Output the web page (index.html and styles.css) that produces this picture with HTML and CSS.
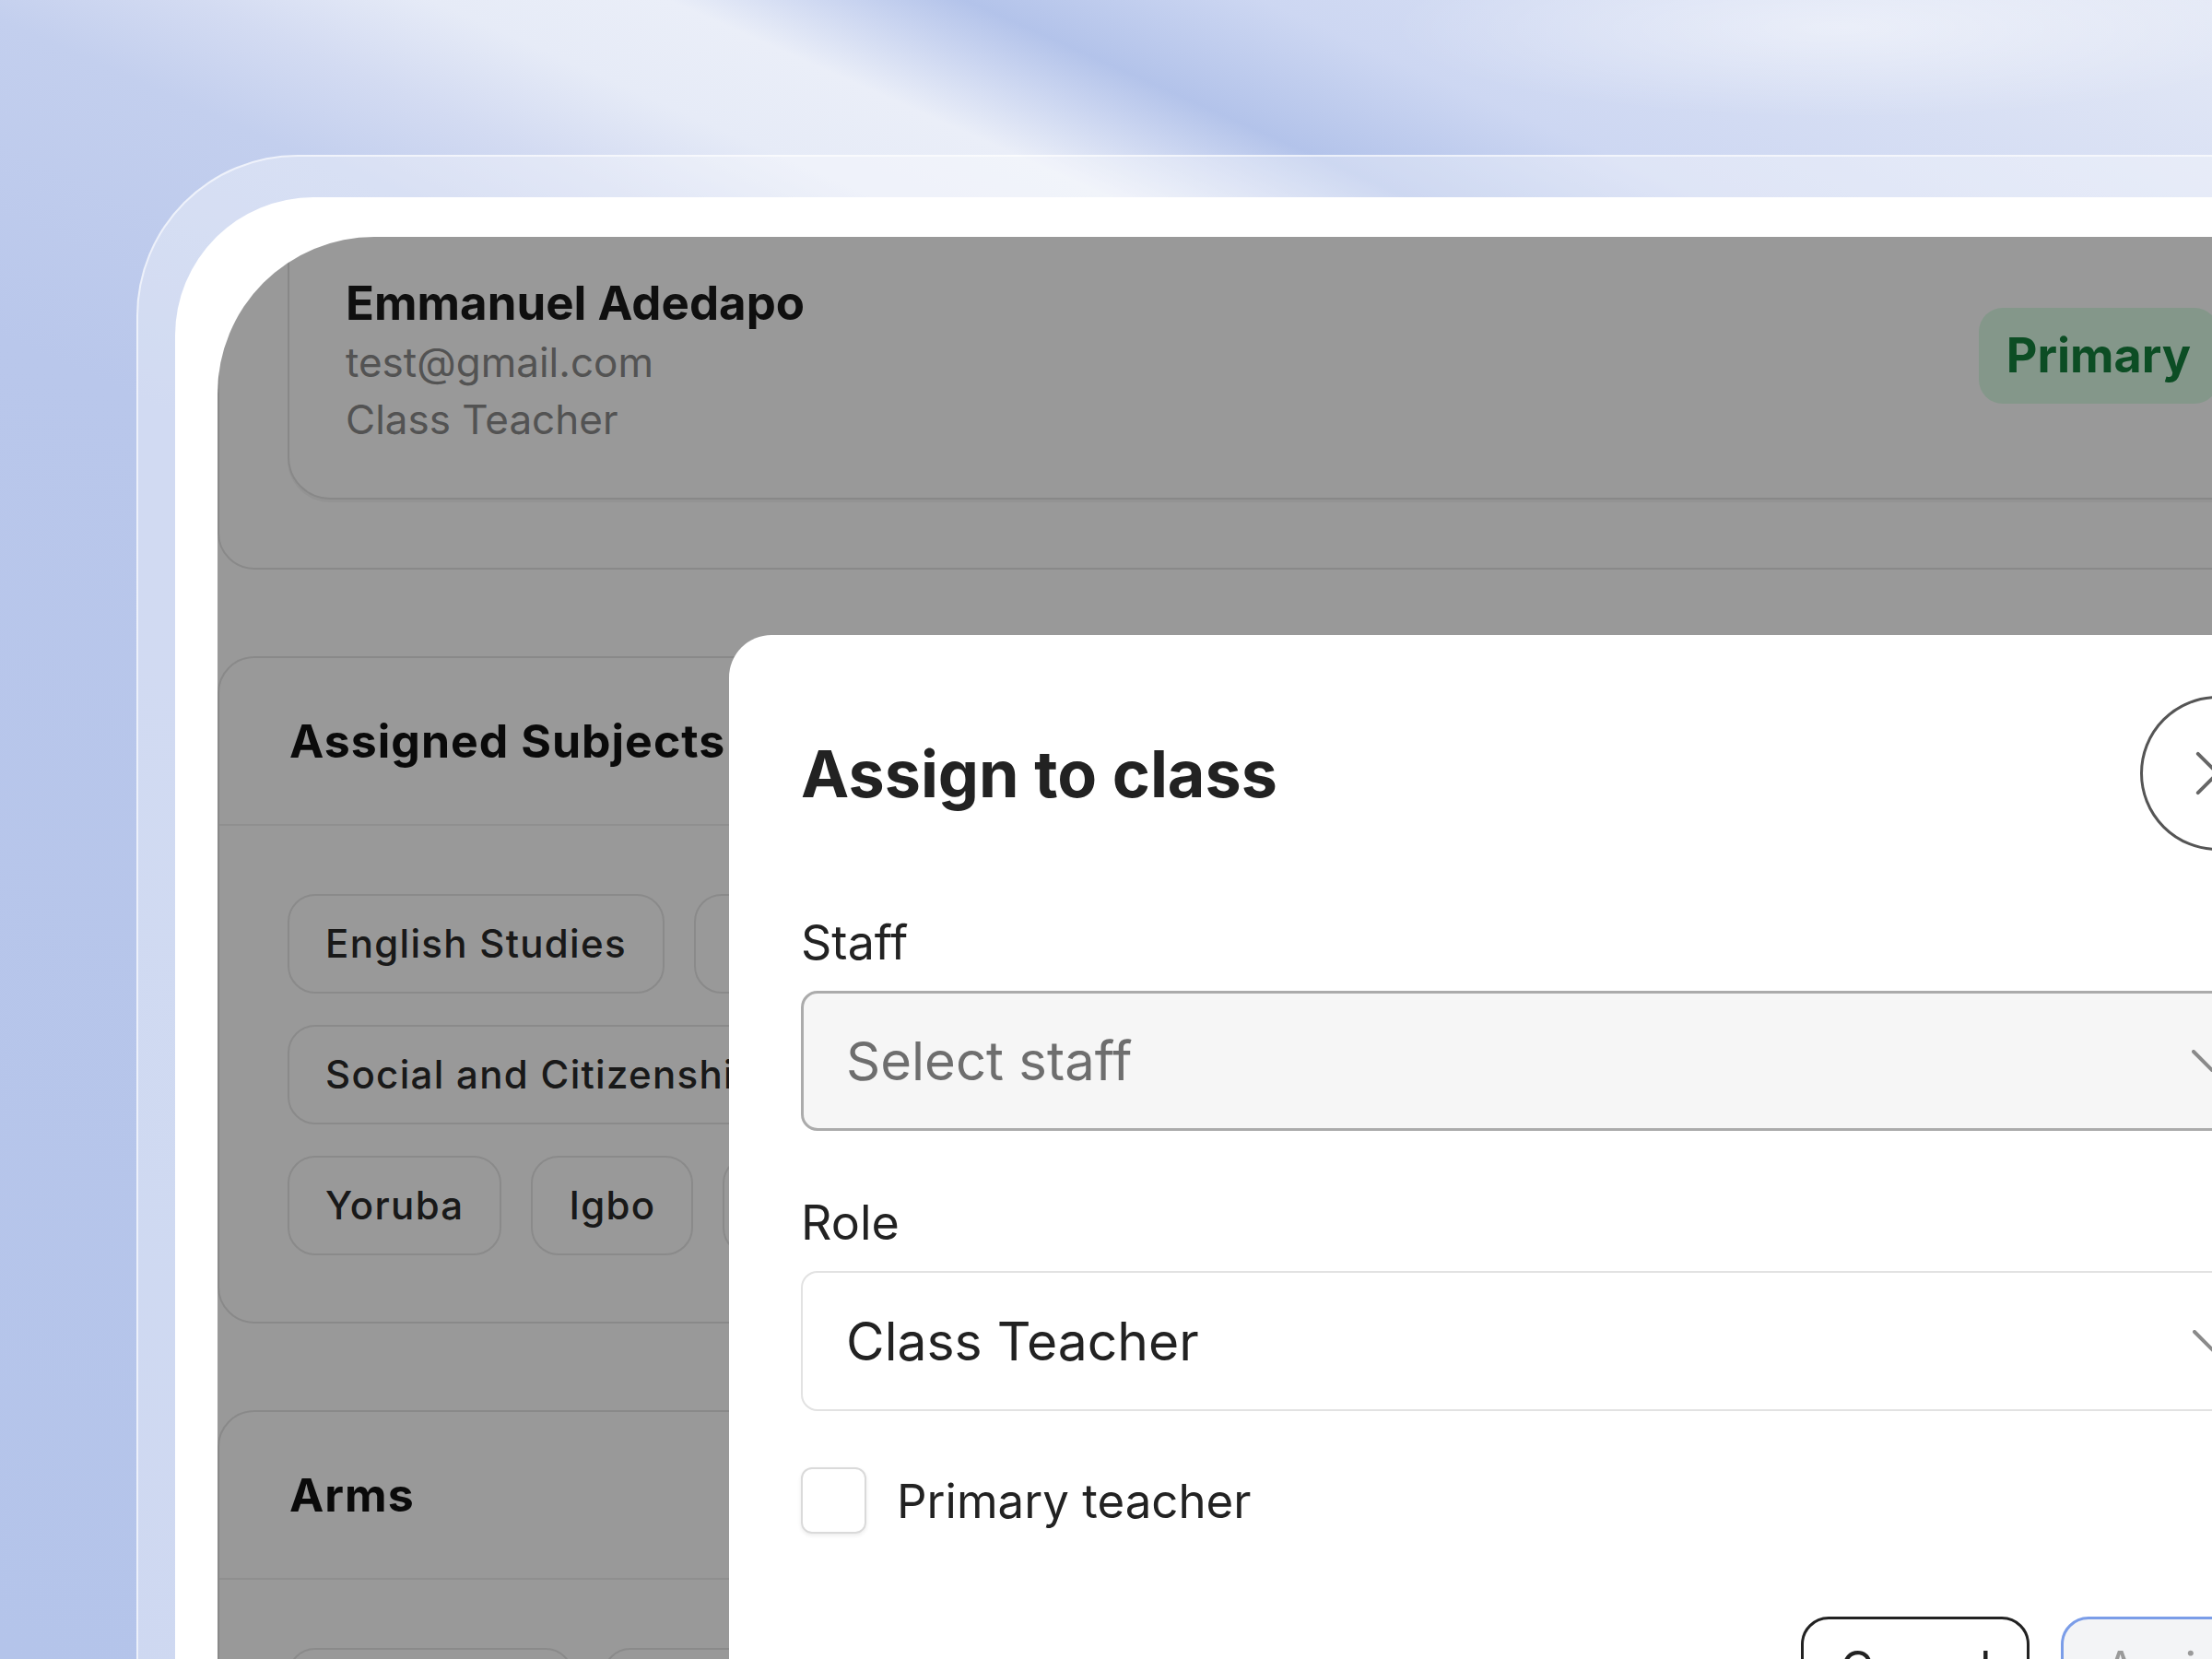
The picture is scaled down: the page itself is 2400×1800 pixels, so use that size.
FILE: index.html
```html
<!DOCTYPE html>
<html lang="en">
  <head>
    <meta charset="UTF-8" />
    <meta name="viewport" content="width=device-width, initial-scale=1.0" />
    <title>Staff - Assign to class</title>
    <link rel="stylesheet" href="styles.css">
  </head>
  <body>
    <div class="frame">
      <div class="bezel">
        <div class="screen">
          <main class="page">
            <section class="profile">
              <div class="profile-card">
                <div class="profile-info">
                  <h2 class="profile-name">Emmanuel Adedapo</h2>
                  <p class="profile-meta">test@gmail.com</p>
                  <p class="profile-meta">Class Teacher</p>
                </div>
                <span class="badge">Primary</span>
              </div>
            </section>

            <div class="columns">
              <div class="col">
                <section class="card">
                  <div class="card-head"><h3>Assigned Subjects</h3></div>
                  <div class="chips">
                    <span class="chip">English Studies</span>
                    <span class="chip">Mathematics</span>
                    <span class="chip">Social and Citizenship Studies</span>
                    <span class="chip">Yoruba</span>
                    <span class="chip">Igbo</span>
                    <span class="chip">Hausa</span>
                  </div>
                </section>
                <section class="card">
                  <div class="card-head"><h3>Arms</h3></div>
                  <div class="chips">
                    <span class="chip">Primary 1A</span>
                    <span class="chip">Primary 1B</span>
                  </div>
                </section>
              </div>
            </div>
          </main>

          <div class="overlay"></div>

          <!-- assign modal -->
          <div class="modal">
            <div class="modal-head">
              <h1 class="modal-title">Assign to class</h1>
              <button class="close" aria-label="Close">
                <svg width="168" height="168" viewBox="0 0 168 168">
                  <path d="M62 62 L106 106 M106 62 L62 106" stroke="#666" stroke-width="4" stroke-linecap="round" fill="none" />
                </svg>
              </button>
            </div>

            <label class="field-label">Staff</label>
            <div class="select">
              <span>Select staff</span>
              <svg width="44" height="24" viewBox="0 0 44 24">
                <polyline points="2,2 22,22 42,2" stroke="#8a8a8a" stroke-width="4" stroke-linecap="round" fill="none" />
              </svg>
            </div>

            <label class="field-label">Role</label>
            <div class="select filled">
              <span>Class Teacher</span>
              <svg width="44" height="24" viewBox="0 0 44 24">
                <polyline points="2,2 22,22 42,2" stroke="#8a8a8a" stroke-width="4" stroke-linecap="round" fill="none" />
              </svg>
            </div>

            <div class="check-row">
              <span class="checkbox"></span>
              <span class="check-label">Primary teacher</span>
            </div>

            <div class="actions">
              <button class="btn">Cancel</button>
              <button class="btn btn-primary">Assign</button>
            </div>
          </div>
        </div>
      </div>
    </div>
  </body>
</html>
```

FILE: styles.css
```css
body {
  margin: 0;
  height: 1800px;
  overflow: hidden;
  font-family: Inter, "Liberation Sans", Arial, sans-serif;
  background:
    radial-gradient(ellipse 700px 140px at 2000px 30px, rgba(255, 255, 255, 0.45), rgba(255, 255, 255, 0) 70%),
    linear-gradient(24deg, #b4c4ea 0%, #b9c7eb 50%, #c3cfee 62%, #d3dbf2 66%, #e6ebf7 70%, #eaeef8 74%, #c9d4f0 77%, #b3c3ea 79%, #cdd7f2 84%, #e4e9f6 100%);
}

.frame {
  margin: 168px 0 0 148px;
  padding: 44px 0 0 40px;
  border-top: 2px solid rgba(255, 255, 255, 0.6);
  border-left: 2px solid rgba(255, 255, 255, 0.6);
  border-top-left-radius: 175px;
  background: rgba(255, 255, 255, 0.35);
}

.bezel {
  padding: 43px 0 0 46px;
  background: #fff;
  border-top-left-radius: 150px;
}

.screen {
  position: relative;
  width: 2400px;
  height: 1600px;
  overflow: hidden;
  background: #fff;
  border-top-left-radius: 170px;
}

.page {
  width: 2310px;
  margin-top: -60px;
}

/* profile */
.profile {
  border: 2px solid #e5e5e5;
  border-radius: 40px;
  padding: 20px 74px 74px 74px;
}

.profile-card {
  display: flex;
  justify-content: space-between;
  align-items: flex-start;
  border: 2px solid #e3e3e3;
  border-radius: 46px;
  padding: 77px 61px 56px;
  box-shadow: 0 3px 0 rgba(0, 0, 0, 0.04);
}

.profile-name {
  margin: 0;
  font-size: 51px;
  line-height: 62px;
  font-weight: 700;
  color: #1a1a1a;
}

.profile-meta {
  margin: 4px 0 0;
  font-size: 44px;
  line-height: 58px;
  color: #8a8a8a;
}

.badge {
  margin-top: 36px;
  height: 104px;
  line-height: 104px;
  padding: 0 30px;
  border-radius: 26px;
  background: #dcfce7;
  color: #15803d;
  font-size: 52px;
  font-weight: 700;
}

/* cards */
.columns {
  display: grid;
  grid-template-columns: 1100px 1fr;
  margin-top: 94px;
}

.col {
  display: flex;
  flex-direction: column;
  gap: 94px;
}

.card {
  border: 2px solid #e5e5e5;
  border-radius: 40px;
}

.card-head {
  padding: 60px 76px;
  border-bottom: 2px solid #efefef;
}

.card-head h3 {
  margin: 0;
  font-size: 50px;
  line-height: 60px;
  font-weight: 700;
  letter-spacing: 1px;
  color: #111;
}

.chips {
  display: flex;
  flex-wrap: wrap;
  gap: 34px 32px;
  padding: 74px 74px 72px;
}

.chip {
  box-sizing: border-box;
  height: 108px;
  line-height: 104px;
  padding: 0 39px;
  border: 2px solid #e6e6e6;
  border-radius: 30px;
  font-size: 42px;
  font-weight: 500;
  letter-spacing: 1.3px;
  color: #2a2a2a;
  white-space: nowrap;
}

.overlay {
  position: absolute;
  inset: 0;
  background: rgba(0, 0, 0, 0.4);
}

/* modal */
.modal {
  position: absolute;
  left: 555px;
  top: 432px;
  width: 1777px;
  height: 1300px;
  box-sizing: border-box;
  padding: 66px 78px 0;
  background: #fff;
  border-radius: 46px;
  color: #222;
}

.modal-head {
  display: flex;
  justify-content: space-between;
  align-items: center;
}

.modal-title {
  margin: 0;
  font-size: 70px;
  font-weight: 700;
  color: #222;
}

.close {
  width: 168px;
  height: 168px;
  padding: 0;
  border: 3px solid #555;
  border-radius: 50%;
  background: #fff;
  display: flex;
  align-items: center;
  justify-content: center;
}

.field-label {
  display: block;
  margin-top: 70px;
  font-size: 52px;
  line-height: 60px;
  color: #222;
}

.select {
  margin-top: 22px;
  height: 152px;
  box-sizing: border-box;
  display: flex;
  align-items: center;
  justify-content: space-between;
  padding: 0 65px 0 46px;
  border: 3px solid #ababab;
  border-radius: 18px;
  background: #f6f6f6;
  font-size: 58px;
  color: #6e6e6e;
}

.select.filled {
  padding-left: 47px;
  border: 2px solid #e2e2e2;
  background: #fff;
  color: #222;
  font-size: 57px;
}

.check-row {
  display: flex;
  align-items: center;
  margin-top: 61px;
}

.checkbox {
  box-sizing: border-box;
  width: 71px;
  height: 72px;
  border: 2px solid #dadada;
  border-radius: 12px;
  box-shadow: 0 2px 4px rgba(0, 0, 0, 0.08);
}

.check-label {
  margin-left: 33px;
  font-size: 51px;
  color: #222;
}

.actions {
  display: flex;
  justify-content: flex-end;
  gap: 34px;
  margin-top: 90px;
}

.btn {
  height: 112px;
  padding: 0 39px;
  border: 3px solid #222;
  border-radius: 30px;
  background: #fff;
  color: #222;
  font-family: inherit;
  font-size: 50px;
}

.btn-primary {
  padding: 0 44px;
  border-color: #7b9de8;
  background: #f3f4f6;
  color: #9a9a9a;
}
```
